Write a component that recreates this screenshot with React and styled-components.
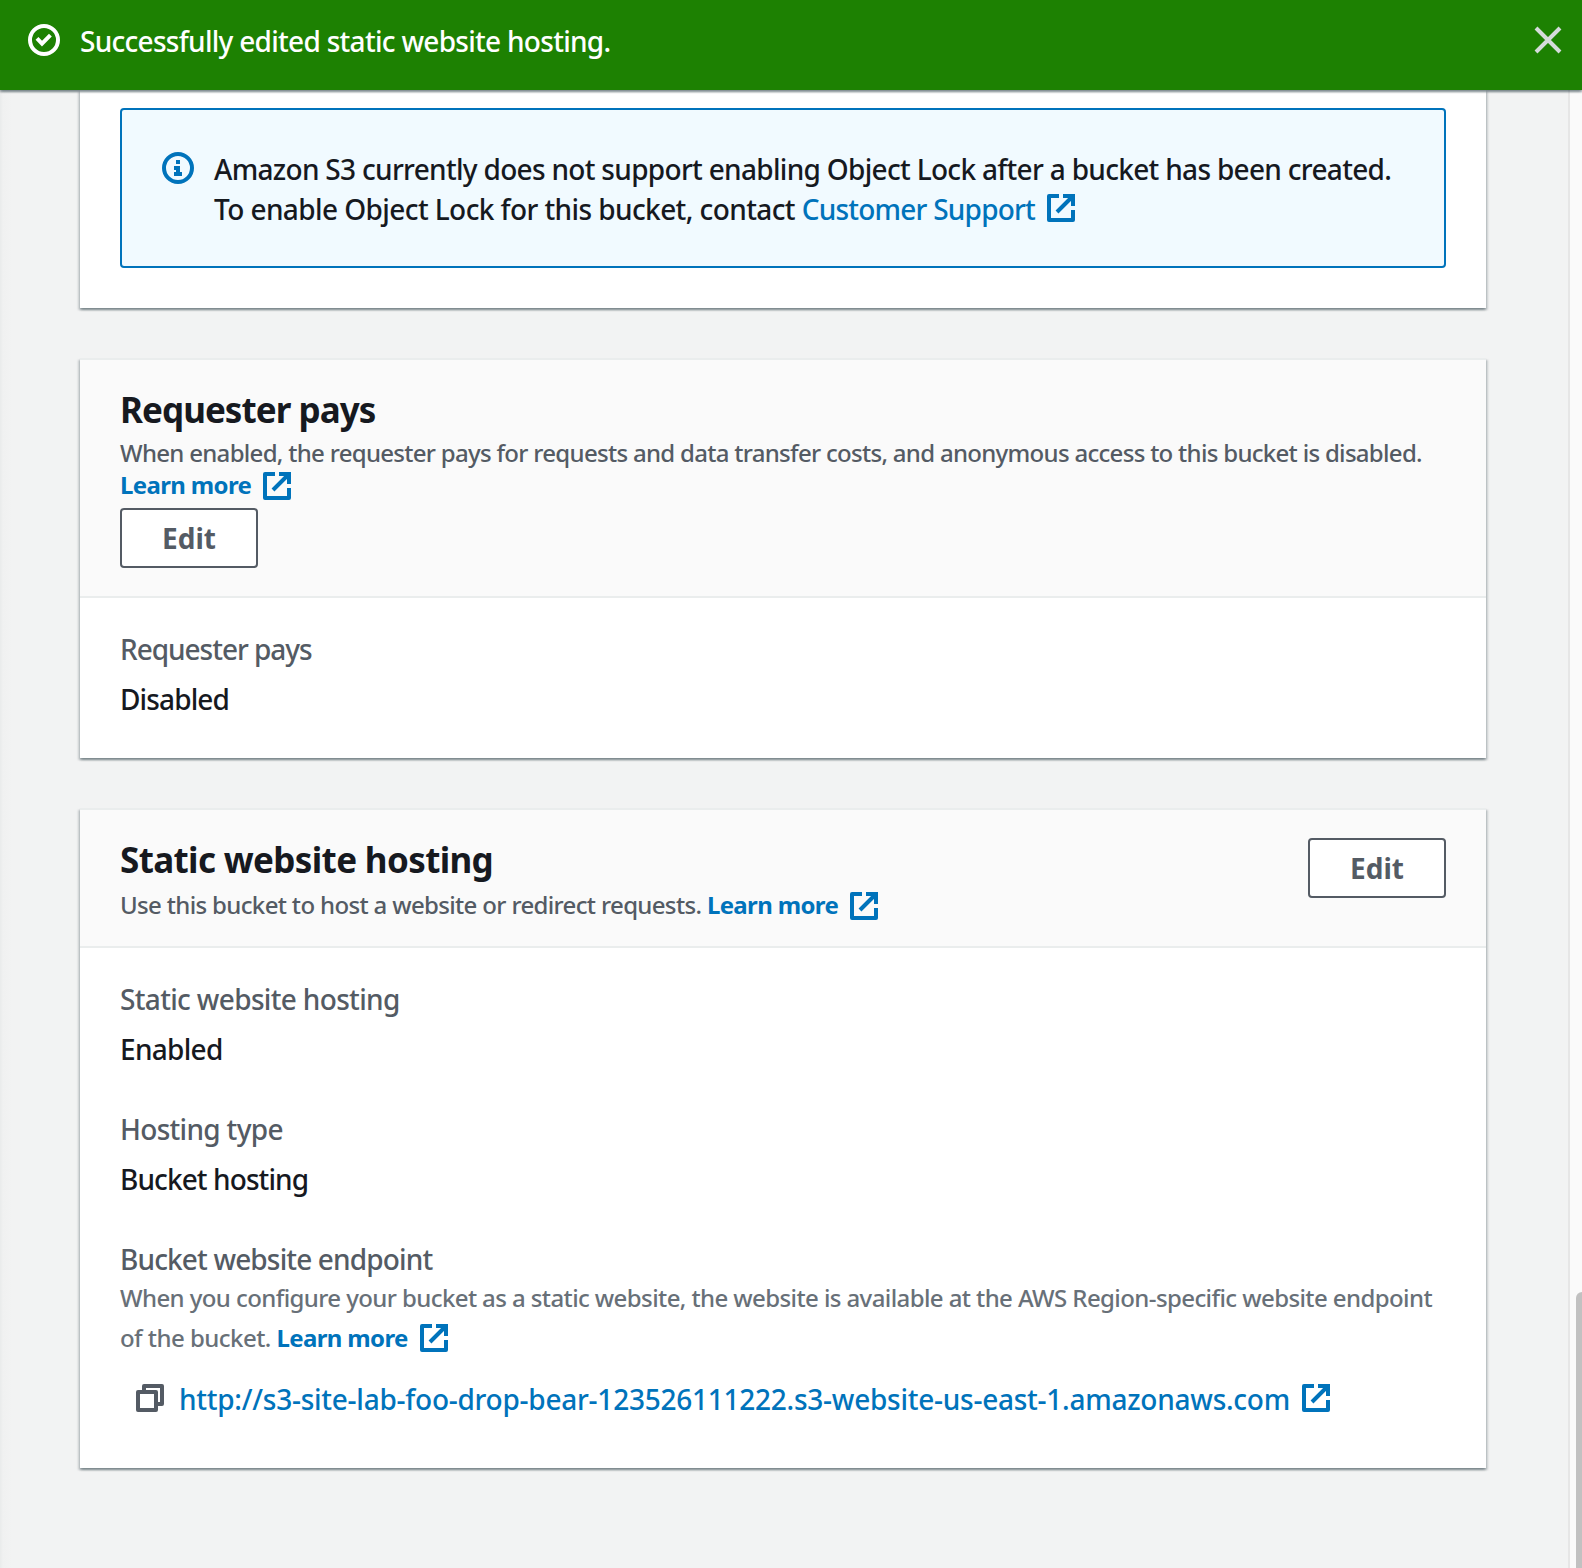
import React from "react";
import styled, { createGlobalStyle } from "styled-components";

const GlobalStyle = createGlobalStyle`
  *, *::before, *::after { box-sizing: border-box; }
  body {
    margin: 0;
    font-family: "Noto Sans", "Open Sans", sans-serif;
    font-size: 28px;
    font-weight: 500;
    line-height: 40px;
    color: #16191f;
    background: #f2f3f3;
  }
`;

const elevation = `
  0 2px 2px 0 rgba(0, 28, 36, 0.3),
  2px 2px 2px 0 rgba(0, 28, 36, 0.15),
  -2px 2px 2px 0 rgba(0, 28, 36, 0.15)`;

const Page = styled.div`
  display: flex;
  flex-direction: column;
  width: 1582px;
  height: 1568px;
  overflow: hidden;
`;

const Banner = styled.header`
  position: relative;
  z-index: 1;
  display: flex;
  align-items: flex-start;
  flex: none;
  gap: 20px;
  height: 90px;
  padding: 20px 18px 0 28px;
  color: #fff;
  background: #1d8102;
  box-shadow: ${elevation};
`;

const BannerText = styled.div`
  flex: 1;
  padding-top: 1px;
  white-space: nowrap;
`;

const CloseButton = styled.button`
  display: flex;
  padding: 0;
  margin-top: 4px;
  border: 0;
  color: #d5dbdb;
  background: none;
`;

const Glyph = styled.svg`
  flex: none;
  width: 32px;
  height: 32px;
  margin-top: ${(p) => p.$top || 0}px;
  fill: none;
  stroke: currentColor;
  stroke-width: 2;
`;

const InlineGlyph = styled(Glyph)`
  display: inline-block;
  margin: -4px 0 -4px ${(p) => p.$gap}px;
  vertical-align: ${(p) => 4 - p.$drop}px;
`;

const Body = styled.div`
  display: flex;
  flex: 1;
  min-height: 0;
`;

const Main = styled.main`
  display: flex;
  flex-direction: column;
  flex: 1;
  gap: 50px;
  padding: 0 82px 0 80px;
  background: linear-gradient(to right, #e9ebeb 0, #f0f1f1 3px, #f2f3f3 12px);
`;

const Rail = styled.aside`
  display: flex;
  justify-content: flex-end;
  width: 14px;
  border-left: 2px solid #e6e6e6;
  background: #fafafa;
  overflow: hidden;
`;

const Thumb = styled.div`
  width: 6px;
  margin-top: 1202px;
  border-radius: 6px 0 0 0;
  background: #c1c1c1;
`;

const Card = styled.section`
  flex: none;
  border-top: ${(p) => (p.$cut ? 0 : "2px solid #eaeded")};
  background: #fff;
  box-shadow: ${elevation};
`;

const AlertArea = styled.div`
  padding: 18px 40px 40px;
`;

const Alert = styled.div`
  display: flex;
  gap: 20px;
  height: 160px;
  padding: 39px 38px 37px 40px;
  border: 2px solid #0073bb;
  border-radius: 4px;
  background: #f1faff;
`;

const CardHeader = styled.div`
  display: flex;
  flex-direction: ${(p) => (p.$stacked ? "column" : "row")};
  align-items: flex-start;
  justify-content: ${(p) => (p.$stacked ? "flex-start" : "space-between")};
  gap: 7px;
  height: ${(p) => p.$height}px;
  padding: 28px 40px 0;
  border-bottom: 2px solid #eaeded;
  background: #fafafa;
`;

const Title = styled.h2`
  margin: 0;
  padding-top: 2px;
  font-size: 35px;
  font-weight: 700;
  line-height: 40px;
  letter-spacing: ${(p) => p.$track}px;
`;

const Description = styled.div`
  margin-top: ${(p) => p.$top}px;
  font-size: 24px;
  line-height: ${(p) => p.$leading || 32}px;
  color: ${(p) => p.$tone || "#545b64"};
`;

const Line = styled.div`
  white-space: nowrap;
`;

const Track = styled.span`
  letter-spacing: ${(p) => p.$by}px;
`;

const Link = styled.a`
  color: #0073bb;
  font-weight: ${(p) => (p.$bold ? 700 : 500)};
  text-decoration: none;
`;

const EditButton = styled.button`
  display: flex;
  align-items: center;
  justify-content: center;
  width: 138px;
  height: 60px;
  padding: 0;
  border: 2px solid #545b64;
  border-radius: 4px;
  font: 700 28px/40px "Noto Sans", "Open Sans", sans-serif;
  color: #545b64;
  background: #fff;
`;

const Fields = styled.div`
  display: flex;
  flex-direction: column;
  gap: 40px;
  padding: 31px 40px ${(p) => p.$bottom}px;
`;

const Label = styled.div`
  color: #545b64;
  white-space: nowrap;
`;

const Value = styled.div`
  margin-top: 10px;
  white-space: nowrap;
`;

const CopyRow = styled.div`
  display: flex;
  align-items: flex-start;
  gap: 13px;
  margin-top: 21px;
  padding-left: 14px;
`;

const CopyIcon = styled(Glyph)`
  color: #545b64;
  stroke-linejoin: round;
`;

const External = ({ drop, gap = 10 }) => (
  <InlineGlyph viewBox="0 0 16 16" $drop={drop} $gap={gap}>
    <path d="M9 2h5v5M6 10l8-8" />
    <path d="M14 9v5H2V2h5" strokeLinejoin="round" />
  </InlineGlyph>
);

const LearnMore = ({ drop, gap }) => (
  <Link $bold>
    <Track $by={-0.65}>Learn more</Track>
    <External drop={drop} gap={gap} />
  </Link>
);

const Field = ({ label, labelTrack, value, valueTrack }) => (
  <div>
    <Label><Track $by={labelTrack}>{label}</Track></Label>
    <Value><Track $by={valueTrack}>{value}</Track></Value>
  </div>
);

export default function App() {
  return (
    <Page>
      <GlobalStyle />
      <Banner>
        <Glyph viewBox="0 0 16 16" $top={4}>
          <circle cx="8" cy="8" r="7" />
          <path d="M4.5 7.2 7 9.8l4.2-4.2" />
        </Glyph>
        <BannerText>
          <Track $by={-0.71}>Successfully edited static website hosting.</Track>
        </BannerText>
        <CloseButton aria-label="Close">
          <Glyph viewBox="0 0 16 16"><path d="M2 2l12 12M14 2L2 14" /></Glyph>
        </CloseButton>
      </Banner>
      <Body>
        <Main>
          <Card $cut>
            <AlertArea>
              <Alert>
                <Glyph viewBox="0 0 16 16" $top={3} color="#0073bb">
                  <circle cx="8" cy="8" r="7" />
                  <path d="M8 11V8H6M10 11H6M8 6V4" />
                </Glyph>
                <div>
                  <Line>
                    <Track $by={-0.69}>Amazon S3 currently does not support enabling Object Lock after a bucket has been created.</Track>
                  </Line>
                  <Line>
                    <Track $by={-0.59}>To enable Object Lock for this bucket, contact </Track>
                    <Link>
                      <Track $by={-0.78}>Customer Support</Track>
                      <External drop={4} gap={9.5} />
                    </Link>
                  </Line>
                </div>
              </Alert>
            </AlertArea>
          </Card>

          <Card>
            <CardHeader $stacked $height={238}>
              <div>
                <Title $track={-0.95}>Requester pays</Title>
                <Description $top={7}>
                  <Line>
                    <Track $by={-0.702}>When enabled, the requester pays for requests and data transfer costs, and anonymous access to this bucket is disabled.</Track>
                  </Line>
                  <Line><LearnMore drop={8} /></Line>
                </Description>
              </div>
              <EditButton>Edit</EditButton>
            </CardHeader>
            <Fields $bottom={39}>
              <Field label="Requester pays" labelTrack={-1.03} value="Disabled" valueTrack={-0.87} />
            </Fields>
          </Card>

          <Card>
            <CardHeader $height={138}>
              <div>
                <Title $track={-0.64}>Static website hosting</Title>
                <Description $top={9}>
                  <Line>
                    <Track $by={-0.655}>Use this bucket to host a website or redirect requests. </Track>
                    <LearnMore drop={8} />
                  </Line>
                </Description>
              </div>
              <EditButton>Edit</EditButton>
            </CardHeader>
            <Fields $bottom={49}>
              <Field label="Static website hosting" labelTrack={-0.66} value="Enabled" valueTrack={-0.7} />
              <Field label="Hosting type" labelTrack={-0.69} value="Bucket hosting" valueTrack={-0.9} />
              <div>
                <Label><Track $by={-0.85}>Bucket website endpoint</Track></Label>
                <Description $top={-1} $leading={40} $tone="#687078">
                  <Line>
                    <Track $by={-0.596}>When you configure your bucket as a static website, the website is available at the AWS Region-specific website endpoint</Track>
                  </Line>
                  <Line>
                    <Track $by={-0.54}>of the bucket. </Track>
                    <LearnMore drop={7} gap={10.5} />
                  </Line>
                </Description>
                <CopyRow>
                  <CopyIcon viewBox="0 0 16 16" $top={3}>
                    <path d="M2 5h9v9H2z" />
                    <path d="M5 5V2h9v9h-3" />
                  </CopyIcon>
                  <Line>
                    <Link>
                      <Track $by={-0.25}>http://s3-site-lab-foo-drop-bear-123526111222.s3-website-us-east-1.amazonaws.com</Track>
                      <External drop={4} gap={10} />
                    </Link>
                  </Line>
                </CopyRow>
              </div>
            </Fields>
          </Card>
        </Main>
        <Rail><Thumb /></Rail>
      </Body>
    </Page>
  );
}
